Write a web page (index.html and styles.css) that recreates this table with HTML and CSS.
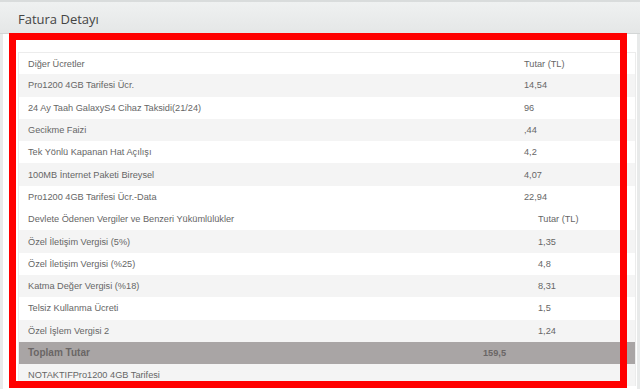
FILE: index.html
```html
<!DOCTYPE html>
<html lang="tr">
<head>
<meta charset="utf-8">
<title>Fatura Detayı</title>
<link rel="stylesheet" href="styles.css">
</head>
<body>
<div class="topband"></div>
<header class="head"><h1 class="title">Fatura Detayı</h1></header>
<main class="panel">
  <table class="tbl tbl-a">
    <tr><td class="c1">Diğer Ücretler</td><td>Tutar (TL)</td></tr>
    <tr><td class="c1">Pro1200 4GB Tarifesi Ücr.</td><td>14,54</td></tr>
    <tr><td class="c1">24 Ay Taah GalaxyS4 Cihaz Taksidi(21/24)</td><td>96</td></tr>
    <tr><td class="c1">Gecikme Faizi</td><td>,44</td></tr>
    <tr><td class="c1">Tek Yönlü Kapanan Hat Açılışı</td><td>4,2</td></tr>
    <tr><td class="c1">100MB İnternet Paketi Bireysel</td><td>4,07</td></tr>
    <tr><td class="c1">Pro1200 4GB Tarifesi Ücr.-Data</td><td>22,94</td></tr>
  </table>
  <table class="tbl tbl-b">
    <tr><td class="c1">Devlete Ödenen Vergiler ve Benzeri Yükümlülükler</td><td>Tutar (TL)</td></tr>
    <tr><td class="c1">Özel İletişim Vergisi (5%)</td><td>1,35</td></tr>
    <tr><td class="c1">Özel İletişim Vergisi (%25)</td><td>4,8</td></tr>
    <tr><td class="c1">Katma Değer Vergisi (%18)</td><td>8,31</td></tr>
    <tr><td class="c1">Telsiz Kullanma Ücreti</td><td>1,5</td></tr>
    <tr><td class="c1">Özel İşlem Vergisi 2</td><td>1,24</td></tr>
  </table>
  <table class="tbl tbl-c">
    <tr class="total"><td class="c1">Toplam Tutar</td><td>159,5</td></tr>
    <tr><td class="c1">NOTAKTIFPro1200 4GB Tarifesi</td><td></td></tr>
  </table>
  <div class="mark" aria-hidden="true"></div>
</main>
</body>
</html>
```
FILE: styles.css
```css
html, body {
  margin: 0;
  padding: 0;
}
body {
  width: 640px;
  height: 389px;
  overflow: hidden;
  background: #e8eaea;
  font-family: "Liberation Sans", Arial, sans-serif;
  color: #666;
}
.topband {
  height: 2px;
  background: #d9dcdc;
}
.head {
  height: 31px;
  background: linear-gradient(#eff1f1, #e5e7e7);
  border-bottom: 1px solid #d3d6d6;
  display: flex;
  align-items: center;
  padding-left: 18px;
}
.title {
  margin: 0;
  font-family: "Open Sans", "Noto Sans", sans-serif;
  font-weight: 400;
  font-size: 13px;
  color: #444;
  position: relative;
  top: 1px;
}
.panel {
  position: relative;
  margin: 0 3px;
  height: 355px;
  background: #fff;
  padding: 18px 1px 0 15px;
  box-sizing: border-box;
}
.tbl {
  width: 100%;
  border-collapse: collapse;
  table-layout: fixed;
  font-size: 9.2px;
}
.tbl-a {
  border-top: 1px solid #ececec;
  border-left: 1px solid #ececec;
  border-right: 1px solid #ececec;
}
.tbl-b, .tbl-c {
  border-left: 1px solid #ececec;
  border-right: 1px solid #ececec;
}
.tbl td {
  height: 22.3px;
  padding: 0 0 0 9px;
  vertical-align: middle;
  white-space: nowrap;
  line-height: 12px;
}
.tbl-a .c1 { width: 487px; }
.tbl-b .c1 { width: 501px; }
.tbl-c .c1 { width: 446px; }
.tbl tr:nth-child(even) td {
  background: #f4f4f4;
}
.tbl-a tr:first-child td {
  height: 21.3px;
}
.tbl-c tr.total td {
  background: #a9a5a5;
  font-weight: bold;
  color: #6a6666;
  font-size: 10px;
}
.tbl-c tr.total td + td {
  font-size: 9.2px;
}
.mark {
  position: absolute;
  left: 6px;
  top: -1px;
  width: 618px;
  height: 355px;
  border: 7px solid #ff0000;
  box-sizing: border-box;
}
```
